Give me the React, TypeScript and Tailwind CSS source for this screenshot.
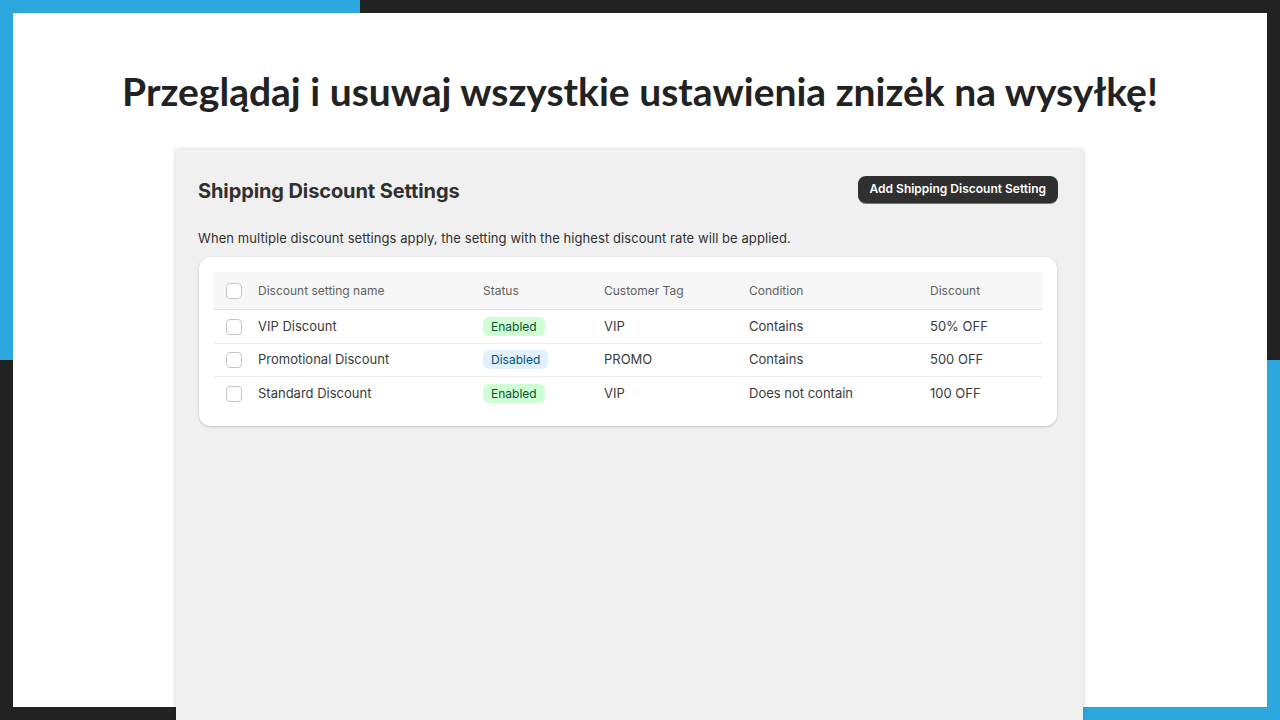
import {Fragment} from 'react';

const rows = [
    {name: 'VIP Discount', enabled: true, tag: 'VIP', condition: 'Contains', discount: '50% OFF'},
    {name: 'Promotional Discount', enabled: false, tag: 'PROMO', condition: 'Contains', discount: '500 OFF'},
    {name: 'Standard Discount', enabled: true, tag: 'VIP', condition: 'Does not contain', discount: '100 OFF'},
];

const Checkbox = () => (
    <span className="block h-4 w-4 rounded-[4px] border border-[#c6c6c6] bg-white"/>
);

const StatusBadge = ({enabled}: {enabled: boolean}) =>
    enabled ? (
        <span className="rounded-md bg-[#cdfed4] px-2 py-[2px] text-[12px] text-[#0c5132]">Enabled</span>
    ) : (
        <span className="rounded-md bg-[#e0f0ff] px-2 py-[2px] text-[12px] text-[#00527c]">Disabled</span>
    );

const cols = 'grid grid-cols-[44px_225px_121px_145px_181px_1fr] items-center';

export default function App() {
    return (
        <div className="relative h-[720px] w-[1280px] overflow-hidden bg-[#222222]">
            {/* corner decor */}
            <div className="absolute left-0 top-0 h-[360px] w-[360px] bg-[#2ca8df]"/>
            <div className="absolute bottom-0 right-0 h-[360px] w-[197px] bg-[#2ca8df]"/>

            <div className="absolute left-[13px] top-[13px] flex h-[694px] w-[1254px] flex-col items-center bg-white">
                <h1 className="mt-[53px] font-['Lato','Open_Sans',sans-serif] text-[39px] font-bold leading-[50px] text-[#222222]">
                    Przeglądaj i usuwaj wszystkie ustawienia znizėk na wysyłkę!
                </h1>

                <div className="ml-[163px] mt-[34px] h-[570px] w-[907px] shrink-0 self-start bg-[#f0f0f0] px-[22px] pt-[26px] font-['Inter',sans-serif] text-[#303030] shadow-[0_0_5px_rgba(0,0,0,0.2)]">
                    <div className="flex items-center justify-between">
                        <h2 className="text-[20px] font-bold tracking-[-0.1px] text-[#303030]">Shipping Discount Settings</h2>
                        <button className="-mt-[4px] mr-[3px] h-[27px] rounded-lg bg-[#303030] px-3 text-[12px] font-semibold text-white shadow-[0_1px_0_rgba(0,0,0,0.5)]">
                            Add Shipping Discount Setting
                        </button>
                    </div>

                    <p className="mt-[22px] text-[13px] leading-5 tracking-[0.07px]">
                        When multiple discount settings apply, the setting with the highest discount rate will be applied.
                    </p>

                    <div className="ml-[1px] mt-[9px] w-[858px] rounded-xl bg-white px-[15px] pb-[16px] pt-[15px] shadow-[0_1px_3px_rgba(0,0,0,0.2)]">
                        <div className={`${cols} h-[38px] border-b border-[#e3e3e3] bg-[#f7f7f7] text-[12px] text-[#616161]`}>
                            <span className="pl-3"><Checkbox/></span>
                            <span>Discount setting name</span>
                            <span>Status</span>
                            <span>Customer Tag</span>
                            <span>Condition</span>
                            <span>Discount</span>
                        </div>
                        {rows.map((r, i) => (
                            <Fragment key={r.name}>
                                <div className={`${cols} ${i === 0 ? 'h-[34px]' : 'h-[33px]'} text-[13px] text-[#3a3a3a] ${i < rows.length - 1 ? 'border-b border-[#ebebeb]' : ''}`}>
                                    <span className="pl-3"><Checkbox/></span>
                                    <span>{r.name}</span>
                                    <span><StatusBadge enabled={r.enabled}/></span>
                                    <span>{r.tag}</span>
                                    <span>{r.condition}</span>
                                    <span>{r.discount}</span>
                                </div>
                            </Fragment>
                        ))}
                    </div>
                </div>
            </div>
        </div>
    );
}
